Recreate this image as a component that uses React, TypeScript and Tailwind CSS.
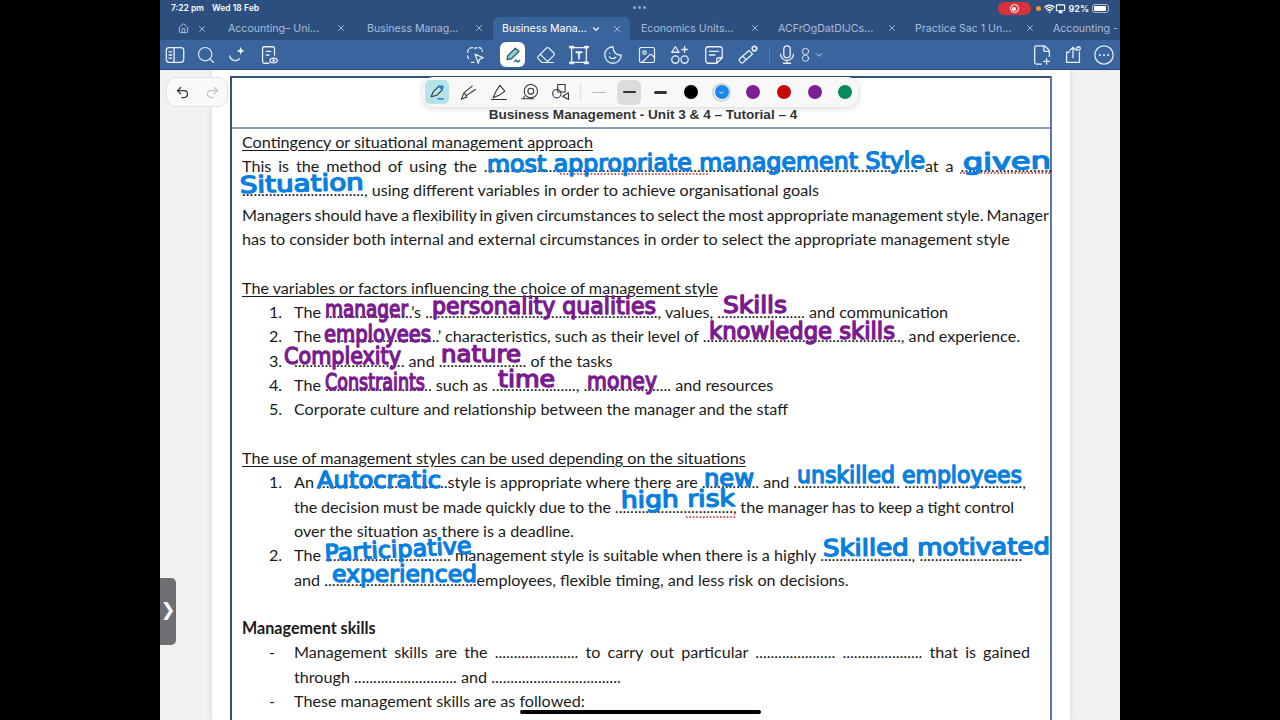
import {
  ChevronDown,
  Eraser,
  FilePlus2,
  House,
  Image,
  Redo2,
  Search,
  Undo2,
  Wifi,
  X,
} from "lucide-react";
import type { ReactNode } from "react";

const Stroke = ({ children, size = 22 }: { children: ReactNode; size?: number }) => (
  <svg width={size} height={size} viewBox="0 0 24 24" fill="none" stroke="currentColor" strokeWidth="1.4" strokeLinecap="round" strokeLinejoin="round">
    {children}
  </svg>
);

const tabs = [
  { name: "Accounting– Uni...", w: "w-[139px] pr-[11px]" },
  { name: "Business Manag...", w: "w-[138px] pr-[11px]" },
];
const tabsAfter = [
  { name: "Economics Units...", w: "w-[137px] pr-[8px]" },
  { name: "ACFrOgDatDIJCs...", w: "w-[137px] pr-[8px]" },
  { name: "Practice Sac 1 Un...", w: "w-[138px] pr-[8px]" },
];

function Tab({ name, w }: { name: string; w: string }) {
  return (
    <div className={`${w} flex shrink-0 items-center justify-between pl-[10px] text-[10.6px] text-[#a9bdd8]`}>
      <span className="whitespace-nowrap">{name}</span>
      <X size={10} className="text-[#b6c6dc]" />
    </div>
  );
}

function TopBar() {
  return (
    <div className="bg-[#2c4f7f] text-white" style={{ fontFamily: "Inter, sans-serif" }}>
      {/* status bar */}
      <div className="relative flex h-[17px] items-center pl-[11px] pr-[11px] text-[8.5px] font-semibold">
        <span>7:22 pm</span>
        <span className="ml-[8px]">Wed 18 Feb</span>
        <div className="absolute left-[473px] top-[6px] flex gap-[2px]">
          <i className="h-[3px] w-[3px] rounded-full bg-[#8fa6c6]" />
          <i className="h-[3px] w-[3px] rounded-full bg-[#8fa6c6]" />
          <i className="h-[3px] w-[3px] rounded-full bg-[#8fa6c6]" />
        </div>
        <div className="ml-auto flex items-center">
          <div className="flex h-[13px] w-[33px] items-center justify-center rounded-full bg-[#d8323c]">
            <div className="flex h-[9px] w-[9px] items-center justify-center rounded-full border border-white">
              <i className="h-[4px] w-[4px] rounded-full bg-white" />
            </div>
          </div>
          <i className="ml-[5px] h-[5px] w-[5px] rounded-full bg-[#e8973a]" />
          <Wifi size={11} strokeWidth={3} className="ml-[3px]" />
          <Stroke size={11}>
            <rect x="3" y="4" width="18" height="13" rx="2" strokeWidth="2.4" />
            <path d="M9 21h6l-3-4z" strokeWidth="2.4" />
          </Stroke>
          <span className="ml-[3px] text-[9px]">92%</span>
          <div className="ml-[3px] flex h-[9px] w-[17px] rounded-[3px] border border-white/60 p-[1px]">
            <i className="h-full w-[90%] rounded-[1px] bg-white" />
          </div>
        </div>
      </div>
      {/* tab row */}
      <div className="flex h-[23px] items-center overflow-hidden">
        <div className="flex w-[58px] shrink-0 items-center justify-between pl-[18px] pr-[11px]">
          <House size={11} className="text-[#b6c6dc]" />
          <X size={10} className="text-[#b6c6dc]" />
        </div>
        {tabs.map((t) => (
          <Tab key={t.name} {...t} />
        ))}
        <div className="-ml-[2px] flex h-[23px] w-[137px] shrink-0 items-center rounded-t-[6px] bg-[#3a649d] pl-[9px] pr-[8px] text-[10.6px] text-white">
          <span className="whitespace-nowrap">Business Mana...</span>
          <ChevronDown size={10} strokeWidth={2.6} className="ml-[4px]" />
          <X size={10} className="ml-auto text-[#c2d0e3]" />
        </div>
        <div className="w-[1px] shrink-0" />
        {tabsAfter.map((t) => (
          <Tab key={t.name} {...t} />
        ))}
        <span className="whitespace-nowrap pl-[10px] text-[10.6px] text-[#a9bdd8]">Accounting -</span>
      </div>
      {/* toolbar */}
      <div className="relative flex h-[30px] items-center border-b border-[#264a78] bg-[#3a649d] text-[#eaf0f8]">
        <div className="absolute left-[4px] flex items-center gap-[10px]">
          <Stroke>
            <rect x="2.500" y="4" width="19" height="16" rx="3" />
            <path d="M11 4v16M5.500 8.500h3M5.500 12h3M5.500 15.500h3" />
          </Stroke>
          <Search size={20} strokeWidth={1.4} />
          <Stroke>
            <path d="M4 13c1 5 7 7 11 3" />
            <path d="M16 3l1.200 3.300L20.500 7.500l-3.300 1.200L16 12l-1.200-3.300L11.500 7.500l3.300-1.200z" fill="currentColor" stroke="none" />
          </Stroke>
          <Stroke>
            <path d="M18 12V5a2 2 0 0 0-2-2H7a2 2 0 0 0-2 2v14a2 2 0 0 0 2 2h5" />
            <path d="M9 8h5M9 12h3" />
            <ellipse cx="17" cy="18" rx="4" ry="2.600" />
            <circle cx="17" cy="18" r=".8" />
          </Stroke>
        </div>
        <div className="absolute left-[304px] flex items-center">
          <Stroke>
            <path d="M4 9c0-3 2-5 5-5 3 1 4 0 7 0 3 0 4 2 4 4M4 13c0 2 1 3 2 4M8 20h3" strokeDasharray="3 2" />
            <path d="M12 11l9 4-4 1.500-1.500 4.500z" />
          </Stroke>
          <div className="ml-[14px] flex h-[25px] w-[25px] items-center justify-center rounded-[6px] bg-white text-[#2d5d74]">
            <svg width="18" height="18" viewBox="0 0 24 24" fill="none" stroke="currentColor" strokeWidth="1.700" strokeLinejoin="round" strokeLinecap="round">
              <path d="M4 18l1-5L15 3l5 4-10 10z" fill="#8fd0d0" />
              <path d="M14 21c1-2 2-3 3-2s-1 2 1 2 2-1 3-2" />
            </svg>
          </div>
          <Eraser size={20} strokeWidth={1.4} className="ml-[11px]" />
          <div className="ml-[12px]">
            <Stroke>
              <rect x="4" y="4" width="16" height="16" />
              <path d="M9 9h6M12 9v7" strokeWidth="2" />
              <path d="M2.500 3.500h3v0M18.500 3.500h3M2.500 20.500h3M18.500 20.500h3" strokeWidth="3" />
            </Stroke>
          </div>
          <div className="ml-[12px]">
            <Stroke>
              <path d="M12 3a9 9 0 1 0 9 9c-5 1-9-3-9-9z" />
              <path d="M8 14c1 2.500 5 2.500 7 .5M8.500 10v.1" />
            </Stroke>
          </div>
          <Image size={20} strokeWidth={1.4} className="ml-[13px]" />
          <div className="ml-[12px]">
            <Stroke>
              <path d="M7 3l4 6H3zM17 3v6M14 6h6" />
              <circle cx="7" cy="17" r="4" />
              <circle cx="17" cy="17" r="4" />
            </Stroke>
          </div>
          <div className="ml-[12px]">
            <Stroke>
              <path d="M6 3h12a3 3 0 0 1 3 3v9l-6 6H6a3 3 0 0 1-3-3V6a3 3 0 0 1 3-3zM21 15h-4a2 2 0 0 0-2 2v4" />
              <path d="M7 8h10M7 12h6" />
            </Stroke>
          </div>
          <div className="ml-[12px]">
            <Stroke>
              <path d="M3 16L13 7l4 4-10 9a2 2 0 0 1-3 0l-1-1a2 2 0 0 1 0-3zM7 14l3 3" />
              <circle cx="19" cy="5" r="2.500" strokeDasharray="1 1.500" strokeWidth="2" />
            </Stroke>
          </div>
          <div className="ml-[10px] mr-[6px] h-[16px] w-px bg-[#567bb0]" />
          <Stroke>
            <rect x="8.500" y="2" width="7" height="13" rx="3.500" />
            <path d="M5 11a7 7 0 0 0 14 0M12 18v3M8 21h8" />
          </Stroke>
          <Stroke size={15}>
            <circle cx="12" cy="7" r="5" />
            <circle cx="12" cy="18" r="5" />
          </Stroke>
          <ChevronDown size={10} className="ml-[1px]" />
        </div>
        <div className="absolute left-[871px] flex items-center gap-[9px]">
          <FilePlus2 size={22} strokeWidth={1.4} />
          <Stroke>
            <path d="M8 9H5v11h14V9M12 15V4M8.500 7L12 3.500 15.500 7" />
            <circle cx="18" cy="5" r="2" />
          </Stroke>
          <Stroke>
            <circle cx="12" cy="12" r="10" />
            <circle cx="7.500" cy="12" r="1.200" fill="currentColor" stroke="none" />
            <circle cx="12" cy="12" r="1.200" fill="currentColor" stroke="none" />
            <circle cx="16.500" cy="12" r="1.200" fill="currentColor" stroke="none" />
          </Stroke>
        </div>
      </div>
    </div>
  );
}

function Dots({ n }: { n: number }) {
  return <span>{".".repeat(n)}</span>;
}

function Line({ children, className = "" }: { children?: ReactNode; className?: string }) {
  return <div className={`h-[24.33px] whitespace-nowrap leading-[24.33px] ${className}`}>{children}</div>;
}

function Item({ mark, children, className = "" }: { mark?: string; children: ReactNode; className?: string }) {
  return (
    <div className="flex h-[24.33px] leading-[24.33px]">
      <span className="w-[52px] shrink-0 pl-[27px]">{mark}</span>
      <div className={`whitespace-nowrap ${className}`}>{children}</div>
    </div>
  );
}

function Page() {
  return (
    <div className="relative flex min-h-0 flex-1 overflow-hidden bg-[#f1f1f1] pl-[52px] pr-[50px]">
      <div className="w-[858px] bg-white px-[18px] pt-[6px] shadow-[0_0_6px_rgba(0,0,0,0.12)]">
        <div className="h-[700px] border-x-2 border-t-2 border-x-[#34527f] border-t-[#34527f] border-r-[#5b7ba6]">
          <div className="flex h-[51px] items-end justify-center border-b-2 border-[#8a9cb8] pb-[3px] pl-[4px] text-[13.6px] font-bold leading-[18px] text-[#333333]" style={{ fontFamily: "'Liberation Sans', sans-serif" }}>
            Business Management - Unit 3 &amp; 4 – Tutorial – 4
          </div>
          <div className="pl-[10px] pt-[0.6px] text-[16.15px] text-[#1a1a1a]" style={{ fontFamily: "Lato, sans-serif" }}>
            <Line className="underline underline-offset-2">Contingency or situational management approach</Line>
            <Line className="w-[810px] whitespace-normal [text-align-last:justify]">
              This is the method of using the <Dots n={114} /> at a <Dots n={24} />
            </Line>
            <Line>
              <Dots n={32} />, using different variables in order to achieve organisational goals
            </Line>
            <Line className="w-[807px] whitespace-normal [word-spacing:-1.5px] [text-align-last:justify]">
              Managers should have a flexibility in given circumstances to select the most appropriate management style. Manager
            </Line>
            <Line>has to consider both internal and external circumstances in order to select the appropriate management style</Line>
            <Line />
            <Line className="underline underline-offset-2">The variables or factors influencing the choice of management style</Line>
            <Item mark="1.">
              The <Dots n={23} />’s <Dots n={61} />, values, <Dots n={23} /> and communication
            </Item>
            <Item mark="2.">
              The <Dots n={30} />’ characteristics, such as their level of <Dots n={52} />, and experience.
            </Item>
            <Item mark="3.">
              <Dots n={29} /> and <Dots n={23} /> of the tasks
            </Item>
            <Item mark="4.">
              The <Dots n={28} /> such as <Dots n={22} />, <Dots n={23} /> and resources
            </Item>
            <Item mark="5.">Corporate culture and relationship between the manager and the staff</Item>
            <Line />
            <Line className="underline underline-offset-2">The use of management styles can be used depending on the situations</Line>
            <Item mark="1.">
              An <Dots n={34} />style is appropriate where there are <Dots n={15} /> and <Dots n={28} /> <Dots n={31} />,
            </Item>
            <Item className="[word-spacing:-0.4px]">
              the decision must be made quickly due to the <Dots n={31} />, the manager has to keep a tight control
            </Item>
            <Item>over the situation as there is a deadline.</Item>
            <Item mark="2.">
              The <Dots n={33} /> management style is suitable when there is a highly <Dots n={24} />, <Dots n={27} />
            </Item>
            <Item>
              and <Dots n={40} />employees, flexible timing, and less risk on decisions.
            </Item>
            <Line />
            <Line className="font-bold">Management skills</Line>
            <div className="flex h-[24.33px] w-[788px] leading-[24.33px]">
              <span className="w-[52px] shrink-0 pl-[27px]">-</span>
              <div className="flex-1 [text-align-last:justify]">
                Management skills are the <Dots n={22} /> to carry out particular <Dots n={21} /> <Dots n={21} /> that is gained
              </div>
            </div>
            <Item>
              through <Dots n={27} /> and <Dots n={34} />
            </Item>
            <Item mark="-">These management skills are as followed:</Item>
          </div>
        </div>
      </div>

      {/* undo / redo pill */}
      <div className="absolute left-[6px] top-[7px] flex h-[30px] w-[62px] items-center justify-around rounded-[10px] border border-[#e2e2e2] bg-[#fafafa]">
        <Undo2 size={15} className="text-[#333333]" />
        <Redo2 size={15} className="text-[#c2c2c2]" />
      </div>

      {/* pen options pill */}
      <div className="absolute left-[263px] top-[7px] flex h-[30px] w-[435px] items-center rounded-[10px] bg-[#f8f8f8] pl-[2px] shadow-[0_1px_6px_rgba(0,0,0,0.18)]">
        <div className="flex h-[24px] w-[24px] items-center justify-center rounded-[5px] bg-[#b5e3ea] text-[#333333]">
          <svg width="17" height="17" viewBox="0 0 24 24" fill="none" stroke="currentColor" strokeWidth="1.500" strokeLinejoin="round">
            <path d="M3 18l3-7 8-8 5 5-8 8z" />
            <path d="M14 3l5 5 1-5z" fill="#1e7fd8" stroke="#1e7fd8" />
            <path d="M12 21h9" stroke="#1e7fd8" strokeWidth="2" />
          </svg>
        </div>
        <div className="ml-[9px] flex items-center gap-[11px] text-[#333333]">
          <Stroke size={20}>
            <path d="M4 21l3-8 10-8M9 17l12-8M7 13l3 3M5 20l6-2" strokeWidth="1.300" />
          </Stroke>
          <Stroke size={20}>
            <path d="M5 19l3-7L13 4l6 7-7 5-7 3zM3 21h18" strokeWidth="1.300" />
          </Stroke>
          <Stroke size={20}>
            <circle cx="13" cy="11" r="8" strokeWidth="1.300" />
            <circle cx="13" cy="11" r="3.500" strokeWidth="1.300" />
            <path d="M2 20h14M5 17v3" strokeWidth="1.300" />
          </Stroke>
          <Stroke size={20}>
            <rect x="8" y="3" width="9" height="9" strokeWidth="1.300" />
            <circle cx="7" cy="14" r="5" strokeWidth="1.300" />
            <path d="M21 13v8l-7-4z" strokeWidth="1.300" />
          </Stroke>
        </div>
        <div className="ml-[9px] h-[18px] w-px bg-[#e2e2e2]" />
        <div className="ml-[11px] h-px w-[14px] bg-[#bdbdbd]" />
        <div className="ml-[11px] flex h-[25px] w-[24px] items-center justify-center rounded-[6px] bg-[#dcdcdc]">
          <i className="h-[2px] w-[13px] rounded bg-[#333333]" />
        </div>
        <i className="ml-[13px] h-[3px] w-[13px] rounded bg-[#333333]" />
        <i className="ml-[17px] h-[14px] w-[14px] rounded-full bg-black" />
        <div className="ml-[14px] flex h-[19px] w-[19px] items-center justify-center rounded-full border-2 border-[#cfd6de]">
          <span className="flex h-[14px] w-[14px] items-center justify-center rounded-full bg-[#1c87e8]">
            <ChevronDown size={7} className="text-white" strokeWidth={3} />
          </span>
        </div>
        <i className="ml-[15px] h-[14px] w-[14px] rounded-full bg-[#7b1f96]" />
        <i className="ml-[17px] h-[14px] w-[14px] rounded-full bg-[#c80808]" />
        <i className="ml-[17px] h-[14px] w-[14px] rounded-full bg-[#7b1f96]" />
        <i className="ml-[16px] h-[14px] w-[14px] rounded-full bg-[#0a8a5a]" />
      </div>
    </div>
  );
}

const blue = "#0b7fdf";
const purple = "#7a1b8f";
// x, baseline, width, colour, text, tilt
const ink: [number, number, number, string, string, number][] = [
  [487, 172, 438, blue, "most appropriate management Style", -0.5],
  [963, 170, 88, blue, "given", -1],
  [240, 193, 124, blue, "Situation", -1.5],
  [317, 488, 124, blue, "Autocratic", 0],
  [704, 486, 50, blue, "new", 0],
  [797, 483, 225, blue, "unskilled employees", 0],
  [621, 508, 114, blue, "high risk", -1],
  [325, 561, 147, blue, "Participative", -3],
  [823, 556, 227, blue, "Skilled motivated", -0.5],
  [332, 582, 145, blue, "experienced", 0],
  [325, 317, 83, purple, "manager", 0],
  [432, 314, 224, purple, "personality qualities", 0],
  [723, 313, 64, purple, "Skills", 0],
  [324, 342, 107, purple, "employees", 0],
  [709, 339, 186, purple, "knowledge skills", 0],
  [284, 364, 117, purple, "Complexity", 0],
  [441, 362, 80, purple, "nature", 0],
  [325, 390, 100, purple, "Constraints", 0],
  [498, 387, 57, purple, "time", 0],
  [587, 389, 70, purple, "money", 0],
];

// pen annotations written over the document
function InkLayer() {
  return (
    <svg className="pointer-events-none absolute left-0 top-0 h-[720px] w-[1280px]" viewBox="0 0 1280 720">
      <path d="M560 174H710M960 173H1052M686 517H736" stroke="#c8202a" strokeWidth="1.600" strokeDasharray="1.600 1.800" fill="none" />
      {ink.map(([x, y, w, color, text, tilt]) => (
        <text
          key={text}
          x={x}
          y={y}
          textLength={w}
          lengthAdjust="spacingAndGlyphs"
          transform={`rotate(${tilt} ${x} ${y})`}
          fill={color}
          stroke={color}
          strokeWidth="1.400"
          strokeLinejoin="round"
          fontSize="23"
          fontFamily="'DejaVu Sans', sans-serif"
        >
          {text}
        </text>
      ))}
    </svg>
  );
}

export default function App() {
  return (
    <div className="relative flex h-[720px] w-[1280px] justify-center overflow-hidden bg-black">
      <div className="flex w-[960px] flex-col">
        <TopBar />
        <Page />
      </div>
      <InkLayer />
      {/* side handle */}
      <div className="absolute left-[160px] top-[578px] flex h-[67px] w-[16px] items-center justify-center rounded-r-[5px] bg-[#6f6f73] pb-[3px] text-[18px] font-bold leading-none text-white" style={{ fontFamily: "'DejaVu Sans', sans-serif" }}>
        ❯
      </div>
      {/* home indicator */}
      <div className="absolute left-[520px] top-[710px] h-[4px] w-[241px] rounded-full bg-black" />
    </div>
  );
}
